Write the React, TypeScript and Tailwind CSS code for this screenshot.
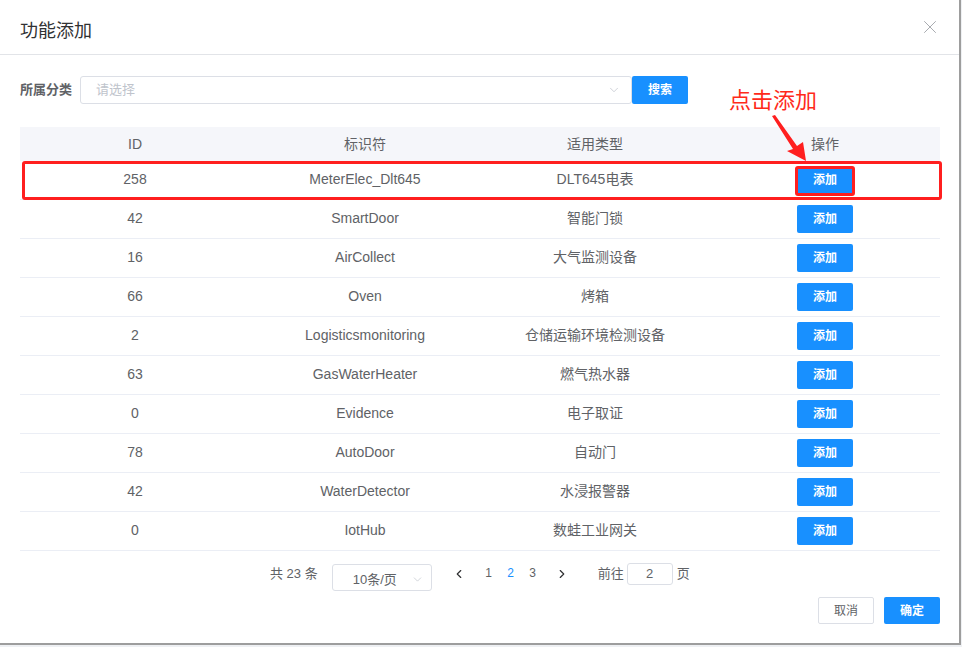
import { X, ChevronDown, ChevronLeft, ChevronRight } from "lucide-react";

const rows = [
  { id: "258", name: "MeterElec_Dlt645", type: "DLT645电表" },
  { id: "42", name: "SmartDoor", type: "智能门锁" },
  { id: "16", name: "AirCollect", type: "大气监测设备" },
  { id: "66", name: "Oven", type: "烤箱" },
  { id: "2", name: "Logisticsmonitoring", type: "仓储运输环境检测设备" },
  { id: "63", name: "GasWaterHeater", type: "燃气热水器" },
  { id: "0", name: "Evidence", type: "电子取证" },
  { id: "78", name: "AutoDoor", type: "自动门" },
  { id: "42", name: "WaterDetector", type: "水浸报警器" },
  { id: "0", name: "IotHub", type: "数蛙工业网关" },
];

function App() {
  return (
    <div className="w-[962px] h-[647px] bg-[#eef0f3] overflow-hidden font-['Liberation_Sans','Noto_Sans_CJK_SC',sans-serif]">
      <div className="relative w-[961px] h-[645px] bg-white border-r-2 border-b-2 border-[#9d9d9d] flex flex-col">
        {/* header */}
        <div className="h-[55px] flex items-center justify-between pl-5 pr-[18px] border-b border-[#e2e4e8]">
          <span className="text-[18px] text-[#303133] mt-[9px]">功能添加</span>
          <X size={22} strokeWidth={1} className="text-[#a0a3a8]" />
        </div>

        <div className="pl-5 pt-[21px]">
          {/* filter */}
          <div className="flex items-center h-7">
            <span className="w-[60px] text-[13px] font-bold text-[#606266]">所属分类</span>
            <div className="w-[552px] h-7 border border-[#dcdfe6] rounded-[3px] flex items-center justify-between pl-[15px] pr-[10px]">
              <span className="text-[13px] text-[#c0c4cc]">请选择</span>
              <ChevronDown size={14} strokeWidth={1.3} className="text-[#c0c4cc]" />
            </div>
            <button className="w-[56px] h-7 bg-[#1890ff] rounded-[2px] text-white text-[12px] font-bold">
              搜索
            </button>
          </div>

          {/* table */}
          <div className="w-[920px] mt-[23px] text-[14px] text-[#606266]">
            <div className="grid grid-cols-4 h-[34px] bg-[#f5f6fa] items-center text-center">
              <span>ID</span>
              <span>标识符</span>
              <span>适用类型</span>
              <span>操作</span>
            </div>
            {rows.map((r, i) => (
              <div
                key={i}
                className="grid grid-cols-4 h-[39px] items-center text-center border-b border-[#ebeef5]"
              >
                <span className="-mt-[2px]">{r.id}</span>
                <span className="-mt-[2px]">{r.name}</span>
                <span className="-mt-[2px]">{r.type}</span>
                <span className="flex justify-center">
                  <button className="w-[56px] h-7 bg-[#1890ff] rounded-[2px] text-white text-[12px] font-bold">
                    添加
                  </button>
                </span>
              </div>
            ))}
          </div>

          {/* pagination */}
          <div className="flex items-start mt-3 ml-[250px] text-[13px] text-[#606266]">
            <span className="h-[21px] leading-[21px]">共 23 条</span>
            <div className="ml-[14px] w-[100px] h-[27px] border border-[#dcdfe6] rounded-[3px] flex items-center justify-between pl-[20px] pr-[7px] mt-[1px]">
              <span className="text-[13px] text-[#606266] mt-[5px]">10条/页</span>
              <ChevronDown size={13} strokeWidth={1.3} className="text-[#c0c4cc] mt-[3px]" />
            </div>
            <div className="ml-[12px] w-[30px] h-[21px] flex items-center justify-center text-[#303133]">
              <ChevronLeft size={14} strokeWidth={2} />
            </div>
            <span className="ml-[4px] w-[22px] h-[21px] leading-[21px] text-center text-[12px] text-[#606266]">1</span>
            <span className="w-[22px] h-[21px] leading-[21px] text-center text-[12px] text-[#1890ff]">2</span>
            <span className="w-[22px] h-[21px] leading-[21px] text-center text-[12px] text-[#606266]">3</span>
            <div className="ml-[3px] w-[30px] h-[21px] flex items-center justify-center text-[#303133]">
              <ChevronRight size={14} strokeWidth={2} />
            </div>
            <span className="ml-[21px] h-[21px] leading-[21px]">前往</span>
            <div className="ml-[3px] w-[46px] h-[22px] border border-[#dcdfe6] rounded-[3px] flex items-center justify-center text-[13px]">
              2
            </div>
            <span className="ml-[4px] h-[21px] leading-[21px]">页</span>
          </div>

          {/* footer */}
          <div className="w-[920px] flex justify-end gap-[10px] mt-[6px]">
            <button className="w-[56px] h-[27px] border border-[#dcdfe6] rounded-[2px] text-[12px] text-[#606266] bg-white">
              取消
            </button>
            <button className="w-[56px] h-[27px] bg-[#1890ff] rounded-[2px] text-[12px] font-bold text-white">
              确定
            </button>
          </div>
        </div>

        {/* annotation overlays */}
        <span className="absolute left-[729px] top-[88px] text-[22px] leading-[26px] text-[#ff2a1a]">
          点击添加
        </span>
        <svg
          className="absolute left-[760px] top-[110px]"
          width="60"
          height="56"
          viewBox="0 0 60 56"
        >
          <polygon
            points="12,6 15,5 37,36 43,32 46,51 27,41 33,39"
            fill="#ff1f1f"
          />
        </svg>
        <div className="absolute left-[22px] top-[161px] w-[920px] h-[39px] border-[3px] border-[#ff1f1f] rounded-[3px]" />
        <div className="absolute left-[795px] top-[166px] w-[60px] h-[30px] border-[3px] border-[#ff1f1f] rounded-[3px]" />
      </div>
    </div>
  );
}

export default App;
